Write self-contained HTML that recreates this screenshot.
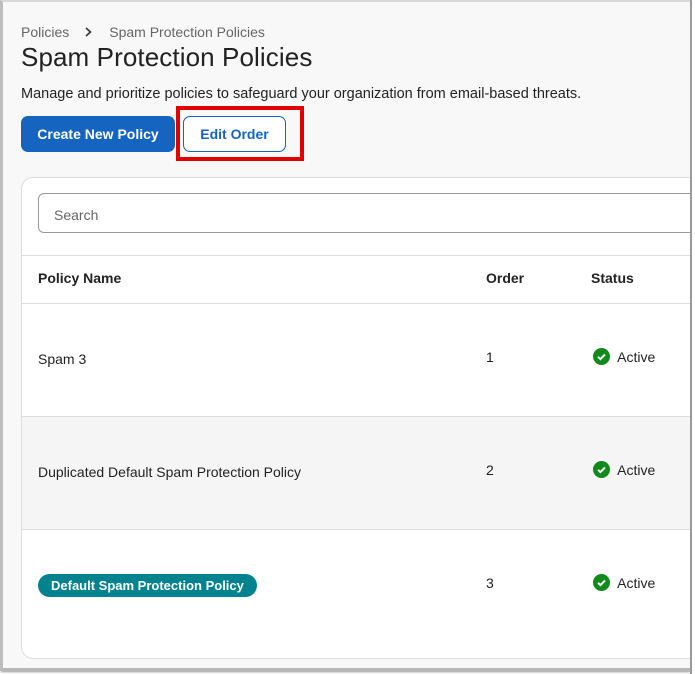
<!DOCTYPE html>
<html><head><style>
*{box-sizing:border-box;margin:0;padding:0}
body{width:695px;height:674px;overflow:hidden;background:#fff;font-family:"Liberation Sans",sans-serif;color:#222;position:relative}
.frame{position:absolute;left:0;top:0;width:693px;height:671px;background:#f8f8f8;border-left:3px solid #bdbdbd;border-top:2px solid #d8d8d8;border-bottom:3px solid #b8b8b8;border-right:2px solid #9a9a9a;box-shadow:1px 1px 2px #999}
.abs{position:absolute}
.bc{left:21px;top:24px;font-size:14px;color:#666}
h1{position:absolute;left:21px;top:42px;font-size:26px;font-weight:normal;color:#222;letter-spacing:0.1px}
.desc{left:21px;top:86px;font-size:14.5px;color:#222}
.btn1{left:21px;top:116px;width:154px;height:36px;background:#1565c0;color:#fff;border-radius:7px;font-weight:bold;font-size:14px;text-align:center;line-height:36px}
.btn2{left:183px;top:116px;width:103px;height:36px;border:1px solid #1565c0;color:#1565c0;background:#fff;border-radius:7px;font-weight:bold;font-size:14px;text-align:center;line-height:34px}
.red{left:176px;top:106px;width:128px;height:55px;border:4px solid #e00000}
.card{left:21px;top:177px;width:690px;height:482px;background:#fff;border:1px solid #ddd;border-radius:12px;overflow:hidden}
.search{left:16px;top:15px;width:700px;height:40px;border:1px solid #999;border-radius:6px;font-size:14px;color:#666;padding:13px 15px}
.row{position:absolute;left:0;width:690px;border-top:1px solid #ddd;font-size:14px}
.row span{position:absolute}
.chk{display:inline-block;width:17px;height:17px;border-radius:50%;background:#108a1a;vertical-align:-3px;position:relative;margin-right:4px}
.chk svg{position:absolute;left:0;top:0}
.pill{background:#00838f;color:#fff;font-weight:bold;font-size:13px;border-radius:12px;padding:4px 13px}
</style></head><body>
<div class="frame"></div>
<div class="abs bc">Policies<svg width="40" height="12" viewBox="0 0 40 12" style="vertical-align:-1px"><path d="M17 2l4.5 4-4.5 4" stroke="#333" stroke-width="1.6" fill="none"/></svg>Spam Protection Policies</div>
<h1>Spam Protection Policies</h1>
<div class="abs desc">Manage and prioritize policies to safeguard your organization from email-based threats.</div>
<div class="abs red"></div>
<div class="abs btn1">Create New Policy</div>
<div class="abs btn2">Edit Order</div>
<div class="abs card">
 <div class="abs search">Search</div>
 <div class="row" style="top:77px;height:48px"><span style="left:16px;top:14px;font-weight:bold">Policy Name</span><span style="left:464px;top:14px;font-weight:bold">Order</span><span style="left:569px;top:14px;font-weight:bold">Status</span></div>
 <div class="row" style="top:125px;height:113px"><span style="left:16px;top:47px">Spam 3</span><span style="left:464px;top:45px">1</span><span style="left:571px;top:44px"><i class="chk"><svg width="17" height="17" viewBox="0 0 17 17"><path d="M5 8.8l2.4 2.3 4.6-4.6" stroke="#fff" stroke-width="2" fill="none"/></svg></i> Active</span></div>
 <div class="row" style="top:238px;height:113px;background:#f5f5f5"><span style="left:16px;top:47px">Duplicated Default Spam Protection Policy</span><span style="left:464px;top:45px">2</span><span style="left:571px;top:44px"><i class="chk"><svg width="17" height="17" viewBox="0 0 17 17"><path d="M5 8.8l2.4 2.3 4.6-4.6" stroke="#fff" stroke-width="2" fill="none"/></svg></i> Active</span></div>
 <div class="row" style="top:351px;height:131px"><span style="left:16px;top:44px" class="pill">Default Spam Protection Policy</span><span style="left:464px;top:45px">3</span><span style="left:571px;top:44px"><i class="chk"><svg width="17" height="17" viewBox="0 0 17 17"><path d="M5 8.8l2.4 2.3 4.6-4.6" stroke="#fff" stroke-width="2" fill="none"/></svg></i> Active</span></div>
</div>
<div class="abs" style="left:690px;top:0;width:5px;height:674px;background:#fff;border-left:2px solid #9a9a9a"></div>
</body></html>
